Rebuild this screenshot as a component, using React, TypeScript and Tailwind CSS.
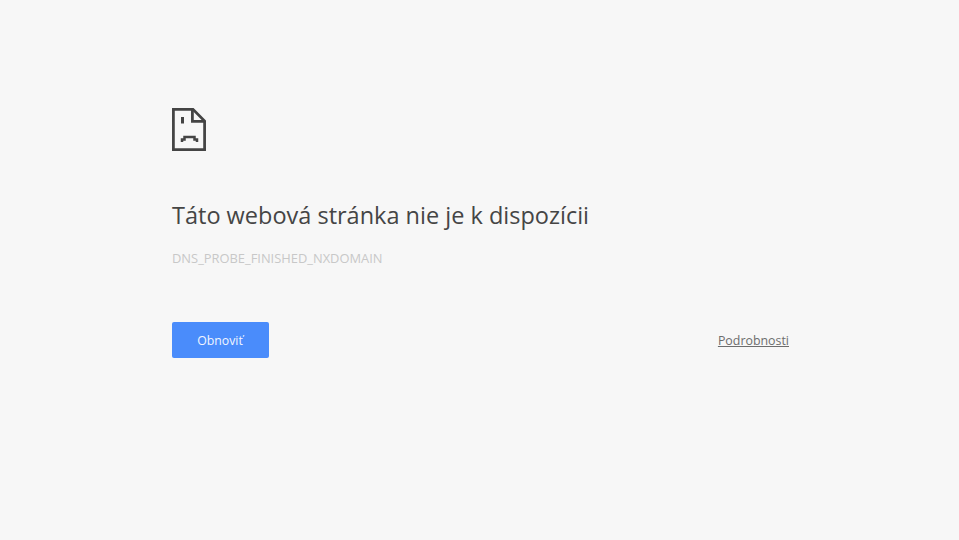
export default function App() {
  return (
    <div className="h-[540px] w-[959px] overflow-hidden bg-[#f7f7f7] pl-[172px] pt-[107px] font-['Open_Sans','Liberation_Sans',sans-serif]">
      {/* sad page icon */}
      <svg width="35" height="44" viewBox="0 0 35 44" className="block" fill="none" stroke="#444444" strokeWidth="2.75">
        <path d="M1.4 2.4H21L32.6 14V42.6H1.4Z" />
        <path d="M20.4 2.4V14.4H32.6" />
        <path d="M10.5 10V16.5" strokeWidth="3" />
        <path d="M10 35V32.5H12.5V30H22.5V32.5H25V35" strokeWidth="2.5" />
      </svg>
      <h1 className="mt-[49px] h-[30px] text-[23.5px] leading-[30px] font-normal whitespace-nowrap text-[#454545]">
        Táto webová stránka nie je k dispozícii
      </h1>
      <p className="mt-[20px] h-[16px] text-[12.9px] leading-[16px] whitespace-nowrap text-[#c8c8c8]">
        DNS_PROBE_FINISHED_NXDOMAIN
      </p>
      <div className="mt-[56px] flex w-[617px] items-center justify-between">
        <button className="h-[36px] w-[97px] rounded-[2px] bg-[#4a8cfb] pt-[2px] pr-px text-[12.3px] font-medium text-[#f2f6ff]">Obnoviť</button>
        <a className="mt-[2px] text-[12.4px] text-[#6d6d6d] underline">Podrobnosti</a>
      </div>
    </div>
  );
}
